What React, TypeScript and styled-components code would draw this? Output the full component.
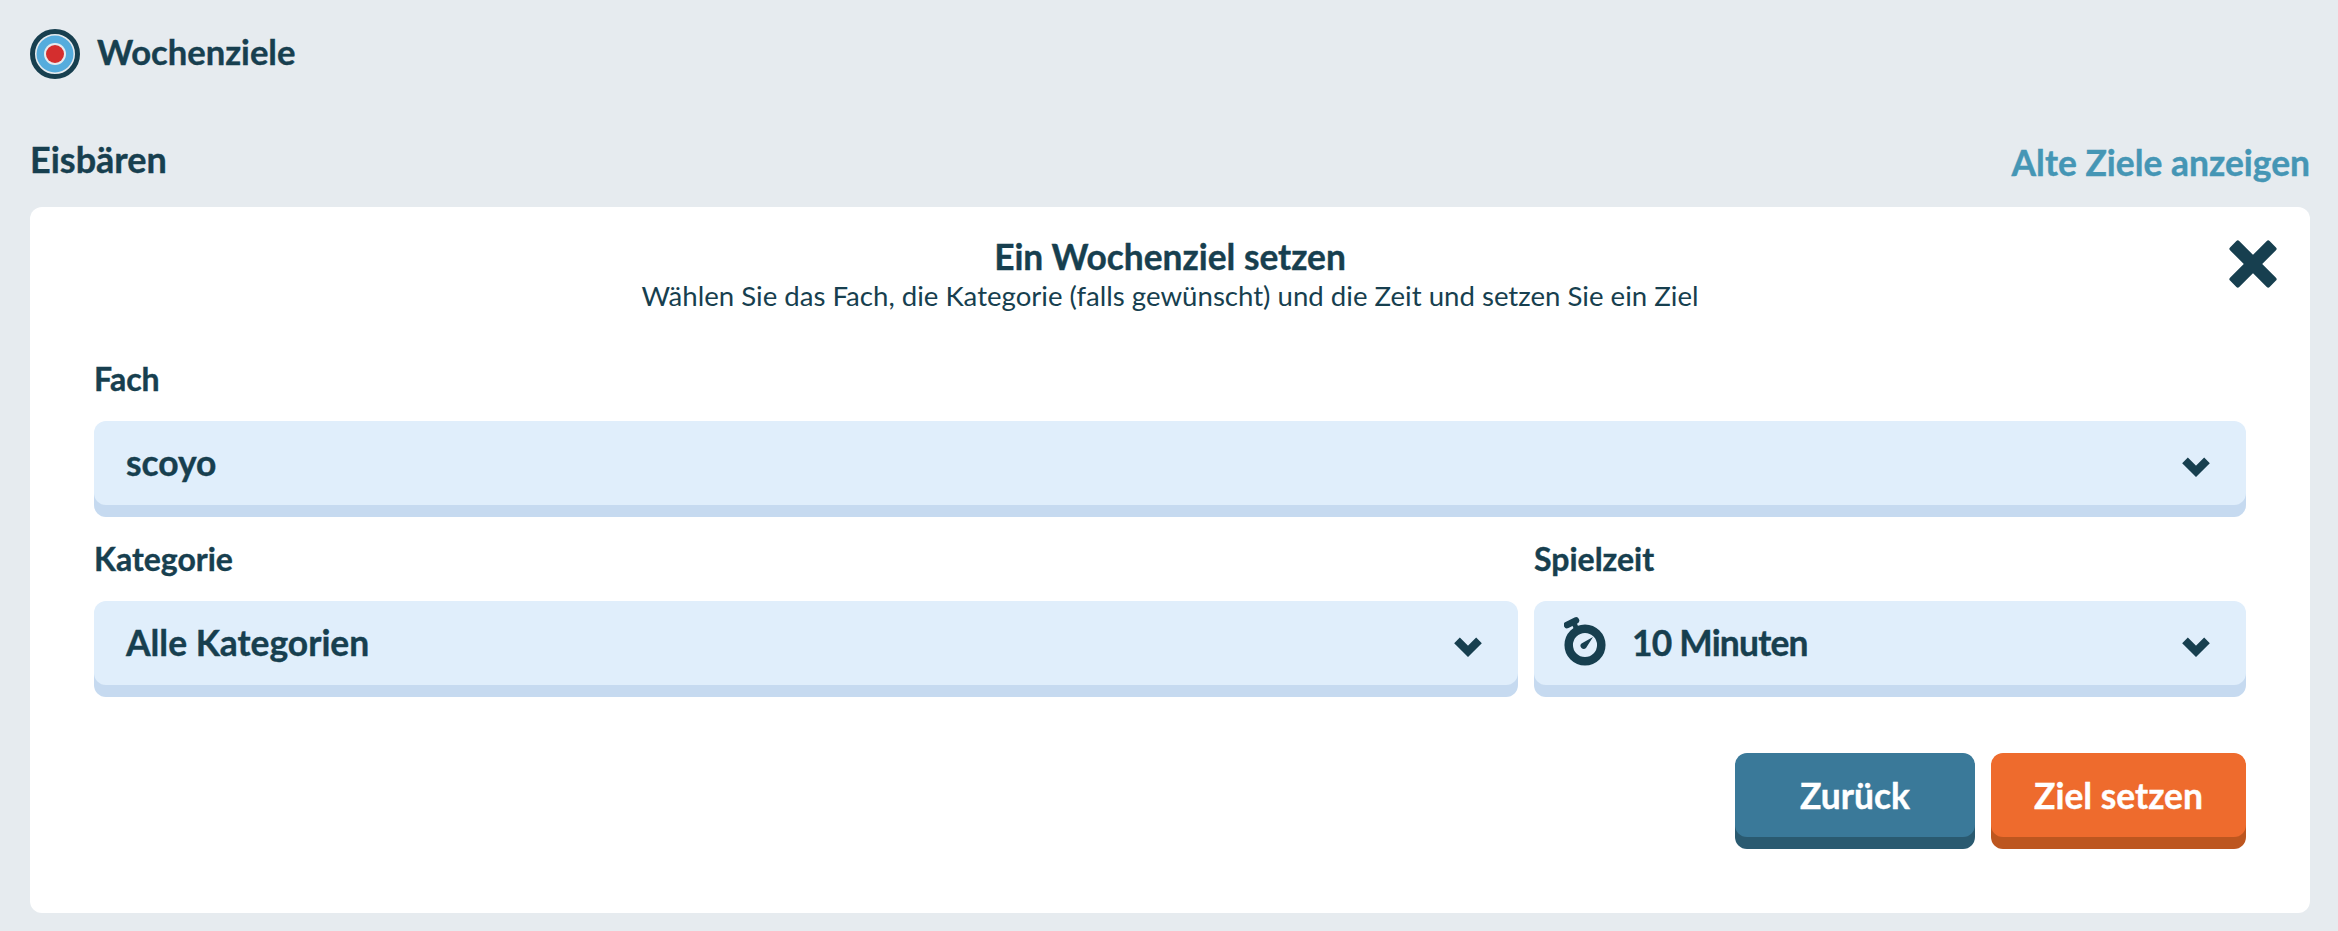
import styled, { createGlobalStyle, css } from 'styled-components';

const dark = '#173f4f';

const GlobalStyle = createGlobalStyle`
  html, body {
    margin: 0;
    background: #e6ebef;
    overflow: hidden;
  }
`;

const heavy = css`
  font-weight: 700;
  -webkit-text-stroke: 0.4px currentColor;
`;

const Page = styled.div`
  min-height: 931px;
  box-sizing: border-box;
  padding: 29px 28px 18px 30px;
  font-family: Lato, 'Open Sans', sans-serif;
  color: ${dark};
`;

const PageHeader = styled.header`
  display: flex;
  align-items: center;
  gap: 17px;
  height: 50px;
`;

const PageTitle = styled.h1`
  margin: 0 0 4px;
  font-size: 34.6px;
  line-height: 50px;
  ${heavy}
`;

const GroupRow = styled.div`
  display: flex;
  justify-content: space-between;
  align-items: flex-end;
  height: 128px;
  padding-bottom: 26px;
  box-sizing: border-box;
`;

const GroupName = styled.h2`
  margin: 0;
  font-size: 36px;
  line-height: 44px;
  ${heavy}
`;

const OldGoalsLink = styled.a`
  font-size: 35.4px;
  line-height: 44px;
  color: #4596b5;
  position: relative;
  top: 4px;
  ${heavy}
`;

const Card = styled.section`
  position: relative;
  background: #fff;
  border-radius: 12px;
  height: 706px;
  box-sizing: border-box;
  padding: 27px 64px 0;
`;

const CardHeading = styled.div`
  text-align: center;
  margin-bottom: 47px;
`;

const CardTitle = styled.h3`
  margin: 0;
  font-size: 35.3px;
  line-height: 46px;
  ${heavy}
`;

const CardSubtitle = styled.p`
  margin: 0;
  font-size: 27.6px;
  font-weight: 400;
  line-height: 32px;
`;

const CloseButton = styled.button`
  position: absolute;
  top: 32px;
  right: 30px;
  width: 52px;
  height: 52px;
  padding: 0;
  border: 0;
  background: none;
`;

const FieldLabel = styled.label`
  display: block;
  font-size: 32px;
  line-height: 40px;
  margin-bottom: 22px;
  ${heavy}
`;

const Field = styled.div`
  margin-bottom: 34px;
`;

const FieldGrid = styled.div`
  display: grid;
  grid-template-columns: 2fr 1fr;
  column-gap: 16px;
`;

const Select = styled.div`
  display: flex;
  align-items: center;
  box-sizing: border-box;
  height: 84px;
  padding: 0 35px 2px 32px;
  background: #e0eefb;
  border-radius: 12px;
  box-shadow: 0 12px 0 #c6daf0;
  font-size: 35.4px;
  ${heavy}
`;

const SelectValue = styled.span<{ $tight?: boolean }>`
  flex: 1;
  letter-spacing: ${p => (p.$tight ? '-0.8px' : '0')};
`;

const ChevronIcon = styled.svg`
  width: 30px;
  height: 20px;
  margin-top: 10px;
`;

const ClockIcon = styled.svg`
  width: 44px;
  height: 50px;
  margin: 0 24px 0 -2px;
`;

const Actions = styled.div`
  display: flex;
  justify-content: flex-end;
  gap: 16px;
  margin-top: 34px;
`;

const ActionButton = styled.button<{ $bg: string; $shade: string; $width: number }>`
  width: ${p => p.$width}px;
  height: 84px;
  border: 0;
  border-radius: 12px;
  background: ${p => p.$bg};
  box-shadow: 0 12px 0 ${p => p.$shade};
  color: #fff;
  font-family: inherit;
  font-size: 35.4px;
  ${heavy}
`;

const Chevron = () => (
  <ChevronIcon viewBox="0 0 30 20">
    <path d="M4 3.3l11 11 11-11" fill="none" stroke={dark} strokeWidth="8" strokeLinejoin="miter" />
  </ChevronIcon>
);

const App = () => {
  return (
    <Page>
      <GlobalStyle />
      <PageHeader>
        <svg width="50" height="50" viewBox="0 0 50 50">
          <circle cx="25" cy="25" r="22.5" fill="#e6ebef" stroke={dark} strokeWidth="5" />
          <circle cx="25" cy="25" r="18.5" fill="#55acdd" />
          <circle cx="25" cy="25" r="11" fill="#e6ebef" />
          <circle cx="25" cy="25" r="9" fill="#d42e2e" />
        </svg>
        <PageTitle>Wochenziele</PageTitle>
      </PageHeader>
      <GroupRow>
        <GroupName>Eisbären</GroupName>
        <OldGoalsLink>Alte Ziele anzeigen</OldGoalsLink>
      </GroupRow>
      <Card>
        <CardHeading>
          <CardTitle>Ein Wochenziel setzen</CardTitle>
          <CardSubtitle>Wählen Sie das Fach, die Kategorie (falls gewünscht) und die Zeit und setzen Sie ein Ziel</CardSubtitle>
        </CardHeading>
        <CloseButton aria-label="Schließen">
          <svg width="52" height="52" viewBox="0 0 52 52">
            <g transform="translate(25 25) rotate(45)" fill={dark}>
              <rect x="-28" y="-6.5" width="56" height="13" rx="2" />
              <rect x="-6.5" y="-28" width="13" height="56" rx="2" />
            </g>
          </svg>
        </CloseButton>
        <Field>
          <FieldLabel>Fach</FieldLabel>
          <Select>
            <SelectValue>scoyo</SelectValue>
            <Chevron />
          </Select>
        </Field>
        <FieldGrid>
          <Field>
            <FieldLabel>Kategorie</FieldLabel>
            <Select>
              <SelectValue>Alle Kategorien</SelectValue>
              <Chevron />
            </Select>
          </Field>
          <Field>
            <FieldLabel>Spielzeit</FieldLabel>
            <Select>
              <ClockIcon viewBox="0 0 44 50">
                <path d="M3 8l9-4.5" fill="none" stroke={dark} strokeWidth="6.5" strokeLinecap="round" />
                <path d="M10 6l3 7" fill="none" stroke={dark} strokeWidth="5" />
                <circle cx="21" cy="28" r="16.3" fill="none" stroke={dark} strokeWidth="8.5" />
                <path d="M29 20L17.5 26.5A3 3 0 0 0 22 31Z" fill={dark} />
              </ClockIcon>
              <SelectValue $tight>10 Minuten</SelectValue>
              <Chevron />
            </Select>
          </Field>
        </FieldGrid>
        <Actions>
          <ActionButton $bg="#3a7999" $shade="#2a5a70" $width={240}>Zurück</ActionButton>
          <ActionButton $bg="#ee6b2d" $shade="#bd561f" $width={255}>Ziel setzen</ActionButton>
        </Actions>
      </Card>
    </Page>
  );
};

export default App;
